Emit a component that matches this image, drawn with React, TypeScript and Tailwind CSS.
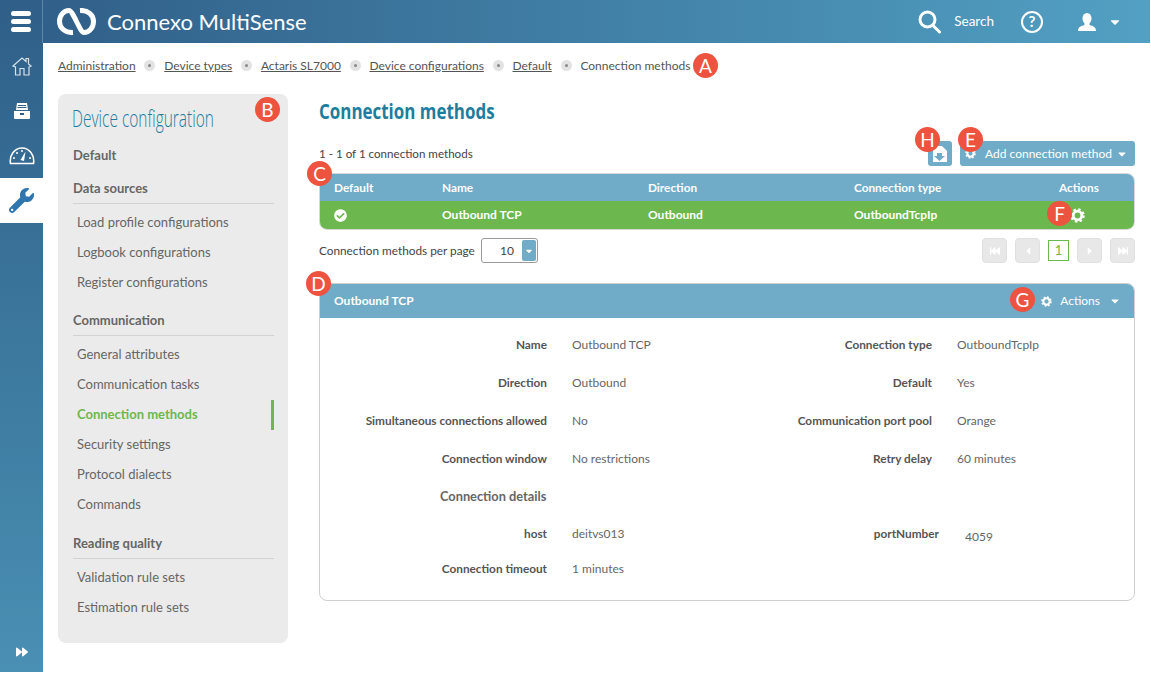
import { FaWrench, FaCheckCircle, FaForward, FaFastForward, FaFastBackward, FaCaretLeft, FaCaretRight, FaCaretDown } from "react-icons/fa";

function Badge({ letter, className }: { letter: string; className: string }) {
  return (
    <span className={`absolute flex h-[25px] w-[25px] items-center justify-center rounded-full bg-[#ee5340] text-[19px] leading-none text-white ${className}`}>
      {letter}
    </span>
  );
}

function Logo() {
  return (
    <svg width="39" height="27" viewBox="0 0 39 27" fill="none" stroke="white" strokeWidth="5">
      <path d="M16 24.5 C8 25 2.5 20 2.5 13.5 C2.5 7 7 2.5 12 2.5 C16 2.5 23 24.5 27 24.5 C32 24.5 36.5 20 36.5 13.5 C36.5 7 31 2 23 2.5" />
    </svg>
  );
}

function House() {
  return (
    <svg width="20" height="20" viewBox="0 0 20 20" fill="none" stroke="#d5e2ec" strokeWidth="1.2">
      <path d="M1 10 L10 2 L14 5.5 V2.5 H16.5 V8 L19 10 L17 11 V19 H12 V12.5 H8 V19 H3.5 V11 Z" />
    </svg>
  );
}

function Drawer() {
  return (
    <svg width="18" height="18" viewBox="0 0 18 18" fill="white">
      <path d="M4 1h10l1 7H3z" />
      <path d="M1 9h16v7a1 1 0 0 1-1 1H2a1 1 0 0 1-1-1z" />
      <rect x="5" y="3" width="8" height="1" fill="#2f5f88" />
      <rect x="4.5" y="5" width="9" height="1" fill="#2f5f88" />
      <rect x="7" y="11" width="4" height="2" fill="#2f5f88" />
    </svg>
  );
}

function Gauge() {
  return (
    <svg width="26" height="18" viewBox="0 0 26 18" fill="none">
      <path d="M1.5 16.5 C0 8 6 1 13 1 C20 1 26 8 24.5 16.5 Z" stroke="white" strokeWidth="1.6" />
      <path d="M16.5 4.5 L15 14 L11.5 13 Z" fill="white" />
      <circle cx="5" cy="11" r="1" fill="white" />
      <circle cx="8" cy="6" r="1" fill="white" />
      <circle cx="13" cy="4" r="1" fill="white" />
      <circle cx="21" cy="11" r="1" fill="white" />
    </svg>
  );
}

function Gear({ size, color = "white" }: { size: number; color?: string }) {
  return (
    <svg width={size} height={size} viewBox="0 0 16 16" fill="none" stroke={color}>
      <circle cx="8" cy="8" r="4.6" strokeWidth="3" />
      <circle cx="8" cy="8" r="6.6" strokeWidth="2.2" strokeDasharray="2.6 2.58" />
    </svg>
  );
}

function SearchGlyph() {
  return (
    <svg width="23" height="24" viewBox="0 0 23 24" fill="none" stroke="white" strokeWidth="3">
      <circle cx="9.5" cy="9.5" r="7.5" />
      <path d="M15 15.5 L21.5 22" strokeLinecap="round" />
    </svg>
  );
}

function UserGlyph() {
  return (
    <svg width="18" height="18" viewBox="0 0 18 18" fill="white">
      <ellipse cx="9" cy="5.5" rx="4.5" ry="5.5" />
      <path d="M6.5 10 L6.5 12 C3 13 0 14 0 18 H18 C18 14 15 13 11.5 12 L11.5 10 Z" />
    </svg>
  );
}

function ExportIcon() {
  return (
    <svg width="16" height="18" viewBox="0 0 16 18" fill="white">
      <path d="M1 1h9l5 5v11H1z" />
      <path d="M5 8h5v3h3l-5.5 5L2 11h3z" fill="#70abc7" />
    </svg>
  );
}

function Crumb({ label }: { label: string }) {
  return (
    <>
      <a className="text-[12px] text-[#555] underline">{label}</a>
      <span className="flex h-[11px] w-[11px] items-center justify-center rounded-full bg-[#e3e3e3]">
        <span className="h-[3px] w-[3px] rounded-full bg-[#888]" />
      </span>
    </>
  );
}

function MenuGroup({ title, items, className = "" }: { title: string; items: string[]; className?: string }) {
  return (
    <div className={className}>
      <div className="flex h-[25px] items-start border-b border-[#d2d2d2] text-[13px] font-bold text-[#666]">{title}</div>
      <ul className="mb-[13px] mt-[4px]">
        {items.map((item) => (
          <li
            key={item}
            className={`flex h-[30px] items-center justify-between pl-[4px] text-[13px] ${item === "Connection methods" ? "font-bold text-[#6cb84f]" : "text-[#666]"}`}
          >
            {item}
            {item === "Connection methods" && <span className="h-[30px] w-[3px] bg-[#6cb84f]" />}
          </li>
        ))}
      </ul>
    </div>
  );
}

function Pager({ children }: { children: React.ReactNode }) {
  return (
    <span className="flex h-[25px] w-[25px] items-center justify-center rounded-[4px] border border-[#e0e0e0] bg-[#e8e8e8] text-white">
      {children}
    </span>
  );
}

function Field({ label, value, className = "h-[38px]" }: { label: string; value: string; className?: string }) {
  return (
    <div className={`flex items-start ${className}`}>
      <span className="w-[227px] text-right text-[11.8px] font-bold text-[#555]">{label}</span>
      <span className="ml-[25px] text-[12px] text-[#666]">{value}</span>
    </div>
  );
}

export default function App() {
  return (
    <div className="flex h-[673px] w-[1151px] overflow-hidden bg-white font-['Lato',sans-serif]">
      <aside className="flex h-[672px] w-[43px] shrink-0 flex-col items-center bg-gradient-to-b from-[#2f5f88] to-[#4a90b4]">
        <div className="flex h-[43px] w-full flex-col items-center justify-center gap-[3px] border-r border-[#5e86a6]">
          <span className="h-[5px] w-[20px] rounded-full bg-white" />
          <span className="h-[5px] w-[20px] rounded-full bg-white" />
          <span className="h-[5px] w-[20px] rounded-full bg-white" />
        </div>
        <div className="flex h-[45px] w-full items-center justify-center"><House /></div>
        <div className="flex h-[45px] w-full items-center justify-center"><Drawer /></div>
        <div className="flex h-[45px] w-full items-center justify-center"><Gauge /></div>
        <div className="flex h-[45px] w-full items-center justify-center bg-white">
          <FaWrench size={25} color="#2f76b0" />
        </div>
        <div className="mb-[14px] mt-auto text-white"><FaForward size={12} /></div>
      </aside>

      <div className="flex min-w-0 flex-1 flex-col pr-[1px]">
        <header className="flex h-[43px] shrink-0 items-center bg-gradient-to-r from-[#31608a] to-[#52a0c3] pl-[14px] text-white">
          <Logo />
          <span className="ml-[11px] text-[22px] leading-none">Connexo MultiSense</span>
          <div className="ml-auto flex items-center">
            <SearchGlyph />
            <span className="ml-[13px] text-[13.5px]">Search</span>
            <span className="ml-[27px] flex h-[22px] w-[22px] items-center justify-center rounded-full border-[2.5px] border-white text-[15px] font-bold leading-none">?</span>
            <span className="ml-[35px]"><UserGlyph /></span>
            <FaCaretDown size={14} className="ml-[12px] mr-[28px]" />
          </div>
        </header>

        <nav className="relative flex h-[45px] shrink-0 items-center gap-[8.8px] pl-[15px]">
          <Crumb label="Administration" />
          <Crumb label="Device types" />
          <Crumb label="Actaris SL7000" />
          <Crumb label="Device configurations" />
          <Crumb label="Default" />
          <span className="text-[12px] text-[#555]">Connection methods</span>
          <Badge letter="A" className="left-[650px] top-[10px]" />
        </nav>

        <div className="flex min-h-0 flex-1 pl-[15px] pt-[6px]">
          <section className="relative h-[549px] w-[230px] shrink-0 rounded-[8px] bg-[#ebebeb] pl-[15px] pr-[14px]">
            <h2 className="-ml-[1px] mt-[9px] origin-left scale-x-[0.645] whitespace-nowrap font-['Open_Sans',sans-serif] text-[24px] font-light leading-[30px] text-[#1e7d9e]">
              Device configuration
            </h2>
            <div className="mb-[14px] mt-[12px] text-[13px] font-bold leading-[20px] text-[#666]">Default</div>
            <MenuGroup title="Data sources" items={["Load profile configurations", "Logbook configurations", "Register configurations"]} />
            <MenuGroup title="Communication" items={["General attributes", "Communication tasks", "Connection methods", "Security settings", "Protocol dialects", "Commands"]} />
            <MenuGroup title="Reading quality" className="pt-[1px]" items={["Validation rule sets", "Estimation rule sets"]} />
            <Badge letter="B" className="left-[197px] top-[3px]" />
          </section>

          <main className="ml-[31px] min-w-0 flex-1 pr-[15px]">
            <h1 className="mt-[3px] origin-left scale-x-[0.77] whitespace-nowrap font-['Open_Sans',sans-serif] text-[22px] font-bold leading-[26px] text-[#1e7d9e]">
              Connection methods
            </h1>

            <div className="relative mt-[18px] flex h-[26px] items-center justify-between">
              <span className="text-[11.6px] text-[#444]">1 - 1 of 1 connection methods</span>
              <div className="flex items-center gap-[8px] self-start">
                <button className="flex h-[25px] w-[24px] items-center justify-center rounded-[3px] bg-[#70abc7]"><ExportIcon /></button>
                <button className="flex h-[25px] w-[175px] items-center whitespace-nowrap rounded-[3px] bg-[#70abc7] pl-[5px] text-[12px] text-white">
                  <Gear size={11} />
                  <span className="ml-[9px]">Add connection method</span>
                  <FaCaretDown size={12} className="ml-auto mr-[7px]" />
                </button>
              </div>
              <Badge letter="H" className="right-[195px] top-[-14px]" />
              <Badge letter="E" className="right-[152px] top-[-14px]" />
            </div>

            <div className="relative mt-[6px] overflow-hidden rounded-[8px] border border-[#d8d8d8] text-[12px] font-bold text-white">
              <div className="flex h-[27px] items-center bg-[#70abc7] pl-[14px] text-[11.8px]">
                <span className="w-[108px]">Default</span>
                <span className="w-[206px]">Name</span>
                <span className="w-[206px]">Direction</span>
                <span className="w-[205px]">Connection type</span>
                <span>Actions</span>
              </div>
              <div className="flex h-[28px] items-center bg-[#6cb84f] pl-[14px]">
                <span className="w-[108px]"><FaCheckCircle size={13} /></span>
                <span className="w-[206px]">Outbound TCP</span>
                <span className="w-[206px]">Outbound</span>
                <span className="w-[205px]">OutboundTcpIp</span>
                <span className="pl-[11px]"><Gear size={15} /></span>
              </div>
            </div>
            <div className="relative">
              <Badge letter="C" className="left-[-12px] top-[-69px]" />
              <Badge letter="F" className="left-[728px] top-[-29px]" />
            </div>

            <div className="mt-[8px] flex h-[25px] items-center">
              <span className="w-[162px] text-[11.8px] text-[#444]">Connection methods per page</span>
              <span className="flex h-[25px] w-[57px] items-center justify-end rounded-[3px] border border-[#9a9a9a] pr-[1px] text-[12px] text-[#444]">
                10
                <span className="ml-[8px] flex h-[21px] w-[14px] items-center justify-center rounded-[2px] bg-[#70abc7] text-white">
                  <FaCaretDown size={10} />
                </span>
              </span>
              <div className="ml-auto flex items-center gap-[8px]">
                <Pager><FaFastBackward size={10} /></Pager>
                <Pager><FaCaretLeft size={12} /></Pager>
                <span className="flex h-[21px] w-[21px] items-center justify-center border border-[#6cb84f] text-[13px] text-[#6cb84f]">1</span>
                <Pager><FaCaretRight size={12} /></Pager>
                <Pager><FaFastForward size={10} /></Pager>
              </div>
            </div>

            <section className="relative mt-[20px] h-[318px] overflow-hidden rounded-[8px] border border-[#d0d0d0]">
              <div className="flex h-[34px] items-center bg-[#70abc7] pl-[14px] text-[12px] font-bold text-white">
                Outbound TCP
                <div className="ml-auto flex items-center font-normal">
                  <Gear size={11} />
                  <span className="ml-[8px]">Actions</span>
                  <FaCaretDown size={12} className="ml-[9px] mr-[13px]" />
                </div>
              </div>
              <div className="grid grid-cols-[385px_1fr] pt-[18px]">
                <div>
                  <Field label="Name" value="Outbound TCP" />
                  <Field label="Direction" value="Outbound" />
                  <Field label="Simultaneous connections allowed" value="No" />
                  <Field label="Connection window" value="No restrictions" />
                </div>
                <div>
                  <Field label="Connection type" value="OutboundTcpIp" />
                  <Field label="Default" value="Yes" />
                  <Field label="Communication port pool" value="Orange" />
                  <Field label="Retry delay" value="60 minutes" />
                </div>
              </div>
              <div className="-mt-[1px] ml-[120px] h-[38px] text-[12.8px] font-bold text-[#666]">Connection details</div>
              <div className="grid grid-cols-[385px_1fr]">
                <Field label="host" value="deitvs013" className="h-[35px]" />
                <div className="flex h-[35px] items-start">
                  <span className="w-[234px] text-right text-[11.8px] font-bold text-[#555]">portNumber</span>
                  <span className="ml-[26px] mt-[3px] text-[12px] text-[#666]">4059</span>
                </div>
              </div>
              <Field label="Connection timeout" value="1 minutes" />
            </section>
            <div className="relative">
              <Badge letter="D" className="left-[-13px] top-[-330px]" />
              <Badge letter="G" className="left-[691px] top-[-314px]" />
            </div>
          </main>
        </div>
      </div>
    </div>
  );
}
